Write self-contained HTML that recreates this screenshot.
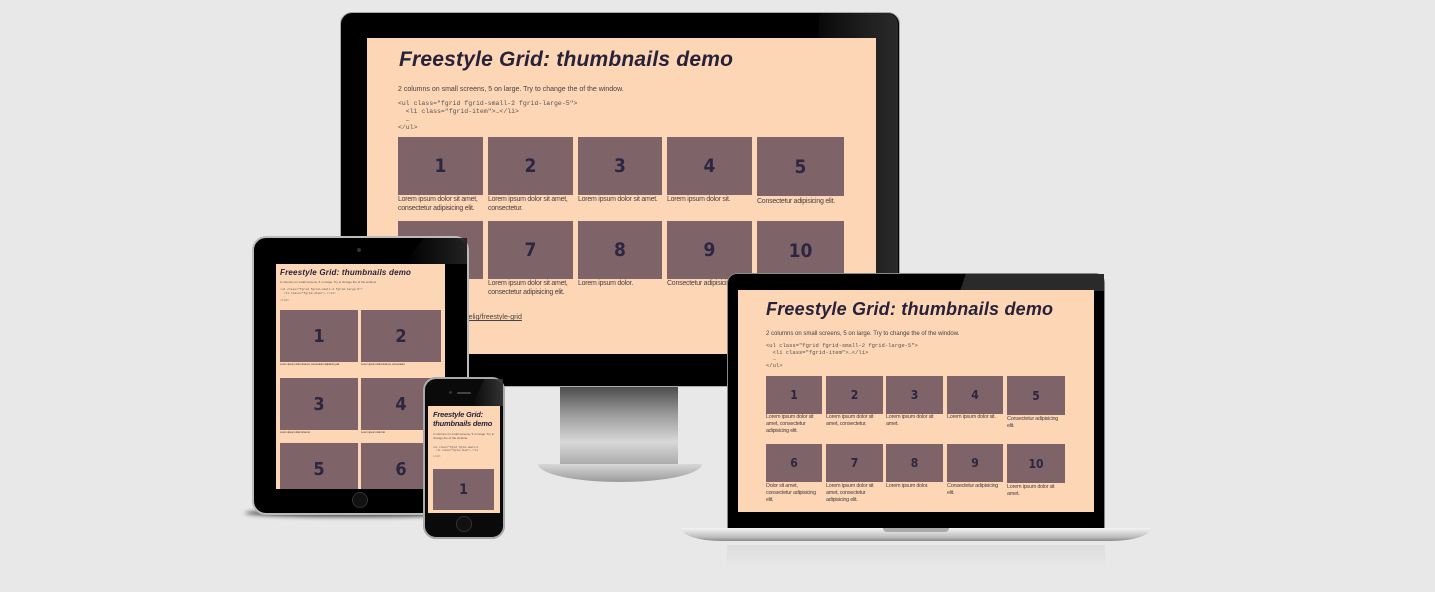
<!DOCTYPE html>
<html><head><meta charset="utf-8"><style>
*{margin:0;padding:0;box-sizing:border-box}
body{width:1435px;height:592px;background:#e8e8e8;position:relative;overflow:hidden;font-family:"Liberation Sans",sans-serif;color:#3a3040}
.a{position:absolute}
.scr{background:#fdd6b5;overflow:hidden}
.t{background:#7e6468;color:#2c2640;display:flex;align-items:center;justify-content:center;font-family:"DejaVu Sans Condensed","Liberation Sans",sans-serif;font-weight:bold}
.h{font-weight:bold;font-style:italic;color:#27223a;white-space:nowrap;letter-spacing:0.2px}
.c{font-family:"Liberation Mono",monospace;white-space:pre;color:#555}
.cap{color:#4a3f45;line-height:1.3;letter-spacing:-0.25px}
</style></head><body>

<!-- monitor -->
<div class="a" style="left:560px;top:386px;width:118px;height:80px;background:linear-gradient(#4a4a4a,#9a9a9a 35%,#d8d8d8 70%,#a8a8a8);clip-path:polygon(0 0,100% 0,100% 85%,105% 100%,-5% 100%,0 85%)"></div>
<div class="a" style="left:538px;top:464px;width:164px;height:18px;border-radius:0 0 50% 50%/0 0 100% 100%;background:linear-gradient(#d8d8d8,#9a9a9a)"></div>
<div class="a" style="left:340px;top:12px;width:560px;height:375px;background:#000;border-radius:12px;border:1px solid #aaa"></div>
<div class="a" style="left:800px;top:13px;width:98px;height:373px;background:linear-gradient(90deg,transparent,#1c1c1c 60%,#2a2a2a);clip-path:polygon(20% 0,100% 0,100% 100%,0 100%);border-radius:0 11px 11px 0"></div>
<div class="a scr" style="left:367px;top:38px;width:509px;height:316px">
 <div class="a h" style="left:32px;top:10px;font-size:21px">Freestyle Grid: thumbnails demo</div>
 <div class="a" style="left:31px;top:48px;font-size:7px;color:#444">2 columns on small screens, 5 on large. Try to change the of the window.</div>
 <div class="a c" style="left:31px;top:62px;font-size:6.5px;line-height:8px">&lt;ul class="fgrid fgrid-small-2 fgrid-large-5"&gt;
  &lt;li class="fgrid-item"&gt;…&lt;/li&gt;
  …
&lt;/ul&gt;</div>
 <div class="a t" style="left:31px;top:99px;width:85px;height:58px;font-size:19px">1</div>
 <div class="a t" style="left:121px;top:99px;width:85px;height:58px;font-size:19px">2</div>
 <div class="a t" style="left:211px;top:99px;width:84px;height:58px;font-size:19px">3</div>
 <div class="a t" style="left:300px;top:99px;width:85px;height:58px;font-size:19px">4</div>
 <div class="a t" style="left:390px;top:99px;width:87px;height:59px;font-size:19px">5</div>
 <div class="a cap" style="left:31px;top:157px;font-size:7px;width:92px">Lorem ipsum dolor sit amet, consectetur adipisicing elit.</div>
 <div class="a cap" style="left:121px;top:157px;font-size:7px;width:92px">Lorem ipsum dolor sit amet, consectetur.</div>
 <div class="a cap" style="left:211px;top:157px;font-size:7px;width:95px">Lorem ipsum dolor sit amet.</div>
 <div class="a cap" style="left:300px;top:157px;font-size:7px;width:90px">Lorem ipsum dolor sit.</div>
 <div class="a cap" style="left:390px;top:159px;font-size:7px;width:95px">Consectetur adipisicing elit.</div>
 <div class="a t" style="left:31px;top:183px;width:85px;height:58px;font-size:19px">6</div>
 <div class="a t" style="left:121px;top:183px;width:85px;height:58px;font-size:19px">7</div>
 <div class="a t" style="left:211px;top:183px;width:84px;height:58px;font-size:19px">8</div>
 <div class="a t" style="left:300px;top:183px;width:85px;height:58px;font-size:19px">9</div>
 <div class="a t" style="left:390px;top:183px;width:87px;height:59px;font-size:19px">10</div>
 <div class="a cap" style="left:121px;top:241px;font-size:7px;width:92px">Lorem ipsum dolor sit amet, consectetur adipisicing elit.</div>
 <div class="a cap" style="left:211px;top:241px;font-size:7px;width:90px">Lorem ipsum dolor.</div>
 <div class="a cap" style="left:300px;top:241px;font-size:7px;width:95px">Consectetur adipisicing elit.</div>
 <div class="a" style="left:58px;top:276px;font-size:7px;text-decoration:underline;color:#444">github.com/kaelig/freestyle-grid</div>
</div>

<!-- tablet -->
<div class="a" style="left:245px;top:509px;width:224px;height:8px;background:#444;border-radius:50%;filter:blur(2px)"></div>
<div class="a" style="left:252px;top:236px;width:217px;height:279px;background:#000;border-radius:14px;border:2px solid #bbb"></div>
<div class="a" style="left:405px;top:238px;width:62px;height:26px;background:linear-gradient(90deg,transparent,#222);clip-path:polygon(30% 0,100% 0,100% 100%,0 100%)"></div>
<div class="a" style="left:357px;top:248px;width:4px;height:4px;border-radius:50%;background:#333"></div>
<div class="a" style="left:352px;top:492px;width:16px;height:16px;border-radius:50%;background:#111;border:1px solid #333"></div>
<div class="a scr" style="left:276px;top:264px;width:169px;height:225px">
 <div class="a h" style="left:4px;top:4px;font-size:8px">Freestyle Grid: thumbnails demo</div>
 <div class="a" style="left:4px;top:16px;font-size:3px;color:#555">2 columns on small screens, 5 on large. Try to change the of the window.</div>
 <div class="a c" style="left:4px;top:24px;font-size:3px;line-height:3.5px">&lt;ul class="fgrid fgrid-small-2 fgrid-large-5"&gt;
  &lt;li class="fgrid-item"&gt;…&lt;/li&gt;
  …
&lt;/ul&gt;</div>
 <div class="a t" style="left:4px;top:46px;width:78px;height:52px;font-size:18px">1</div>
 <div class="a t" style="left:85px;top:46px;width:80px;height:52px;font-size:18px">2</div>
 <div class="a cap" style="left:4px;top:99px;font-size:3px;width:78px">Lorem ipsum dolor sit amet, consectetur adipisicing elit.</div>
 <div class="a cap" style="left:85px;top:99px;font-size:3px;width:80px">Lorem ipsum dolor sit amet, consectetur.</div>
 <div class="a t" style="left:4px;top:114px;width:78px;height:52px;font-size:18px">3</div>
 <div class="a t" style="left:85px;top:114px;width:80px;height:52px;font-size:18px">4</div>
 <div class="a cap" style="left:4px;top:167px;font-size:3px">Lorem ipsum dolor sit amet.</div>
 <div class="a cap" style="left:85px;top:167px;font-size:3px">Lorem ipsum dolor sit.</div>
 <div class="a t" style="left:4px;top:179px;width:78px;height:52px;font-size:18px">5</div>
 <div class="a t" style="left:85px;top:179px;width:80px;height:52px;font-size:18px">6</div>
</div>

<!-- phone -->
<div class="a" style="left:423px;top:377px;width:82px;height:162px;background:#0a0a0a;border-radius:13px;border:2px solid #aaa"></div>
<div class="a" style="left:472px;top:379px;width:31px;height:27px;background:linear-gradient(90deg,transparent,#333);clip-path:polygon(40% 0,100% 0,100% 100%,0 100%)"></div>
<div class="a" style="left:457px;top:392px;width:14px;height:2px;background:#444;border-radius:1px"></div>
<div class="a" style="left:449px;top:391px;width:3px;height:3px;border-radius:50%;background:#333"></div>
<div class="a" style="left:456px;top:516px;width:16px;height:16px;border-radius:50%;background:#111;border:1px solid #333"></div>
<div class="a scr" style="left:428px;top:406px;width:72px;height:107px">
 <div class="a h" style="left:5px;top:4px;font-size:7.5px;line-height:9px;letter-spacing:-0.2px">Freestyle Grid:<br>thumbnails demo</div>
 <div class="a" style="left:5px;top:26px;font-size:3px;color:#555;width:62px">2 columns on small screens, 5 on large. Try to change the of the window.</div>
 <div class="a c" style="left:5px;top:40px;font-size:2.5px;line-height:3px">&lt;ul class="fgrid fgrid-small-2
  &lt;li class="fgrid-item"&gt;…&lt;/li
  …
&lt;/ul&gt;</div>
 <div class="a t" style="left:5px;top:63px;width:61px;height:41px;font-size:14px">1</div>
</div>

<!-- laptop -->
<div class="a" style="left:727px;top:545px;width:378px;height:22px;background:linear-gradient(#dcdcdc,#e8e8e8)"></div>
<div class="a" style="left:727px;top:273px;width:378px;height:256px;background:#000;border-radius:10px 10px 0 0;border:1px solid #888"></div>
<div class="a" style="left:960px;top:274px;width:144px;height:17px;background:#2a2a2a;clip-path:polygon(4% 0,100% 0,100% 100%,0 100%)"></div>
<div class="a" style="left:682px;top:528px;width:468px;height:13px;background:linear-gradient(#f4f4f4,#bdbdbd 70%,#8a8a8a);border-radius:0 0 40px 40px/0 0 12px 12px"></div>
<div class="a" style="left:883px;top:528px;width:66px;height:4px;background:#aaa;border-radius:0 0 5px 5px"></div>
<div class="a scr" style="left:738px;top:290px;width:356px;height:222px">
 <div class="a h" style="left:28px;top:9px;font-size:18px">Freestyle Grid: thumbnails demo</div>
 <div class="a" style="left:28px;top:41px;font-size:6px;color:#444">2 columns on small screens, 5 on large. Try to change the of the window.</div>
 <div class="a c" style="left:28px;top:53px;font-size:5.5px;line-height:6.5px">&lt;ul class="fgrid fgrid-small-2 fgrid-large-5"&gt;
  &lt;li class="fgrid-item"&gt;…&lt;/li&gt;
  …
&lt;/ul&gt;</div>
 <div class="a t" style="left:28px;top:86px;width:56px;height:38px;font-size:12px">1</div>
 <div class="a t" style="left:88px;top:86px;width:57px;height:38px;font-size:12px">2</div>
 <div class="a t" style="left:148px;top:86px;width:57px;height:38px;font-size:12px">3</div>
 <div class="a t" style="left:209px;top:86px;width:56px;height:38px;font-size:12px">4</div>
 <div class="a t" style="left:269px;top:86px;width:58px;height:39px;font-size:12px">5</div>
 <div class="a cap" style="left:28px;top:124px;font-size:5.5px;width:58px">Lorem ipsum dolor sit amet, consectetur adipisicing elit.</div>
 <div class="a cap" style="left:88px;top:124px;font-size:5.5px;width:60px">Lorem ipsum dolor sit amet, consectetur.</div>
 <div class="a cap" style="left:148px;top:124px;font-size:5.5px;width:58px">Lorem ipsum dolor sit amet.</div>
 <div class="a cap" style="left:209px;top:124px;font-size:5.5px;width:56px">Lorem ipsum dolor sit.</div>
 <div class="a cap" style="left:269px;top:126px;font-size:5.5px;width:58px">Consectetur adipisicing elit.</div>
 <div class="a t" style="left:28px;top:154px;width:56px;height:38px;font-size:12px">6</div>
 <div class="a t" style="left:88px;top:154px;width:57px;height:38px;font-size:12px">7</div>
 <div class="a t" style="left:148px;top:154px;width:57px;height:38px;font-size:12px">8</div>
 <div class="a t" style="left:209px;top:154px;width:56px;height:38px;font-size:12px">9</div>
 <div class="a t" style="left:269px;top:154px;width:58px;height:39px;font-size:12px">10</div>
 <div class="a cap" style="left:28px;top:193px;font-size:5.5px;width:58px">Dolor sit amet, consectetur adipisicing elit.</div>
 <div class="a cap" style="left:88px;top:193px;font-size:5.5px;width:58px">Lorem ipsum dolor sit amet, consectetur adipisicing elit.</div>
 <div class="a cap" style="left:148px;top:193px;font-size:5.5px;width:58px">Lorem ipsum dolor.</div>
 <div class="a cap" style="left:209px;top:193px;font-size:5.5px;width:56px">Consectetur adipisicing elit.</div>
 <div class="a cap" style="left:269px;top:194px;font-size:5.5px;width:60px">Lorem ipsum dolor sit amet.</div>
</div>
</body></html>
